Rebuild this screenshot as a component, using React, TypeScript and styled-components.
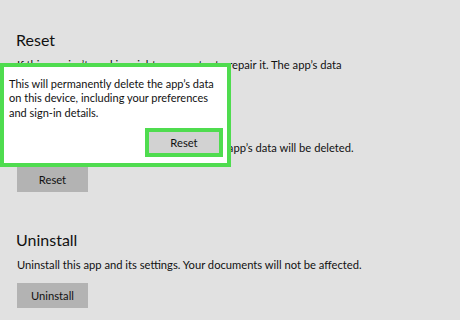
import * as React from 'react';

import styled, { createGlobalStyle } from 'styled-components';

const pageBg = '#e1e1e1';
const buttonBg = '#b3b3b3';
const highlight = '#4fdc4f';

const GlobalStyle = createGlobalStyle`
	html, body {
		margin: 0;
		padding: 0;
		background: ${pageBg};
	}
	body {
		font-family: Lato, 'Open Sans', sans-serif;
		color: #111;
	}
`;

const Page = styled.div`
	position: relative;
	width: 460px;
	height: 320px;
	overflow: hidden;
	padding: 29px 0 0 16px;
	box-sizing: border-box;
`;

const Section = styled.section`
	display: flex;
	flex-direction: column;
	align-items: flex-start;
	margin-bottom: ${(props: { gap?: number }) => props.gap ?? 0}px;
`;

const Heading = styled.h2`
	margin: 0 0 ${(props: { after?: number }) => props.after ?? 6}px;
	font-size: 16px;
	font-weight: 400;
	line-height: 22px;
	color: #111;
`;

const Text = styled.p`
	margin: 0 0 ${(props: { after?: number }) => props.after ?? 0}px 1px;
	font-size: 11.2px;
	line-height: 15px;
	white-space: nowrap;
`;

const Button = styled.button`
	margin-left: 1px;
	width: 71px;
	height: 25px;
	border: none;
	background: ${buttonBg};
	font-family: inherit;
	font-size: 11.2px;
	color: #111;
	padding: 0;
`;

const Popup = styled.div`
	position: absolute;
	left: 0;
	top: 63px;
	width: 231px;
	height: 104px;
	box-sizing: border-box;
	border: 4px solid ${highlight};
	background: #fff;
	padding: 10px 4px 6px 5px;
	display: flex;
	flex-direction: column;
	justify-content: space-between;
`;

const PopupText = styled.p`
	margin: 0;
	font-size: 11px;
	line-height: 14.3px;
	color: #111;
`;

const PopupActions = styled.div`
	display: flex;
	justify-content: flex-end;
`;

const PopupButton = styled.button`
	width: 78px;
	height: 29px;
	box-sizing: border-box;
	border: 4px solid ${highlight};
	background: #d2d2d2;
	font-family: inherit;
	font-size: 11.2px;
	color: #111;
	padding: 0;
`;

export default function App() {
	return (
		<Page>
			<GlobalStyle />
			<Section gap={37}>
				<Heading>Reset</Heading>
				<Text>If this app isn’t working right, we can try to repair it. The app’s data</Text>
				<Text after={14}>won’t be affected.</Text>
				<Button>Repair</Button>
				<Text after={12} style={{ marginTop: 14 }}>
					If it still isn’t working properly, reset it. The app’s data will be deleted.
				</Text>
				<Button>Reset</Button>
			</Section>
			<Section>
				<Heading>Uninstall</Heading>
				<Text after={11}>Uninstall this app and its settings. Your documents will not be affected.</Text>
				<Button>Uninstall</Button>
			</Section>
			<Popup>
				<PopupText>
					This will permanently delete the app’s data on this device, including your preferences and
					sign-in details.
				</PopupText>
				<PopupActions>
					<PopupButton>Reset</PopupButton>
				</PopupActions>
			</Popup>
		</Page>
	);
}
